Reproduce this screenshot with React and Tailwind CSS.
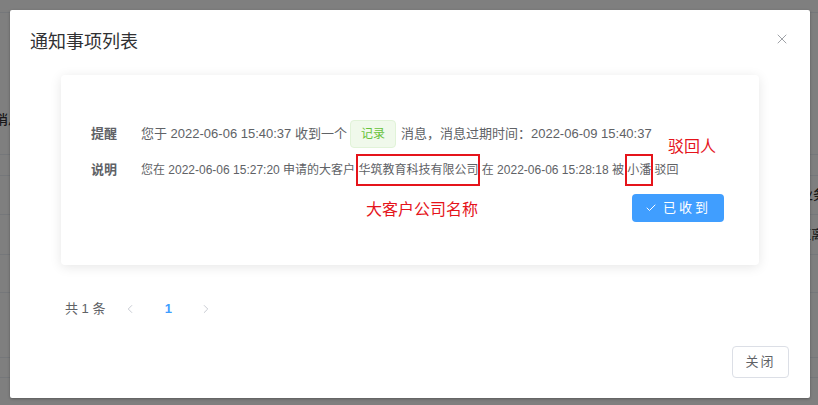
import React from "react"
import { Check, ChevronLeft, ChevronRight, X } from "lucide-react"

const font = { fontFamily: '"Liberation Sans", "Noto Sans CJK SC", sans-serif' }

// red annotation box drawn over a word
function Marked({ children }) {
  return (
    <span className="relative inline-block">
      {children}
      <span className="absolute -left-[2px] -right-[2px] -top-[7px] -bottom-[7px] border-2 border-[#e5141b] pointer-events-none" />
    </span>
  )
}

function BackgroundPage() {
  return (
    <div className="flex flex-col h-[405px] bg-white text-[#303133] text-[13px]">
      <div className="h-[13px] border-b border-[#ebeef5]" />
      <div className="h-[142px] border-b border-[#ebeef5] flex items-end pb-[25px]">
        <span className="-ml-[5px] font-medium">消息</span>
      </div>
      <div className="h-[21px] border-b border-[#ebeef5]" />
      <div className="h-[39px] border-b border-[#ebeef5] flex items-center justify-end">
        <span className="-mr-[8px] font-medium">业务</span>
      </div>
      <div className="h-[40px] border-b border-[#ebeef5] flex items-center justify-end">
        <span className="-mr-[6px]">距离</span>
      </div>
      <div className="h-[38px] border-b border-[#ebeef5]" />
      <div className="h-[65px] border-b border-[#ebeef5]" />
      <div className="h-[20px] border-b border-[#ebeef5]" />
    </div>
  )
}

export default function App() {
  return (
    <div className="relative w-[818px] h-[405px] overflow-hidden" style={font}>
      <BackgroundPage />
      <div className="absolute inset-0 bg-black/50 pt-[10px] pl-[10px]">
        <div className="w-[800px] h-[388px] bg-white rounded-[2px] shadow-[0_1px_3px_rgba(0,0,0,0.3)] flex flex-col">
          {/* header */}
          <div className="flex items-start justify-between pt-[20px] px-[20px] pb-[10px]">
            <span className="text-[18px] leading-[24px] text-[#303133]">通知事项列表</span>
            <X size={16} strokeWidth={1.3} className="text-[#909399] mt-[1px]" />
          </div>

          {/* body */}
          <div className="px-[51px] pt-[11px]">
            <div className="relative h-[190px] rounded-[4px] bg-white shadow-[0_2px_12px_0_rgba(0,0,0,0.1)] pt-[45px] pl-[30px] pr-[35px] text-[12px] text-[#606266]">
              <div className="flex items-center h-[28px] text-[13px]">
                <span className="w-[50px] font-semibold text-[#606266]">提醒</span>
                <span>您于 2022-06-06 15:40:37 收到一个</span>
                <span className="ml-[3px] mr-[5px] h-[28px] px-[10px] flex items-center rounded-[4px] border border-[#e1f3d8] bg-[#f0f9eb] text-[12px] text-[#67c23a]">记录</span>
                <span>消息，消息过期时间：2022-06-09 15:40:37</span>
              </div>
              <div className="flex items-center h-[28px] mt-[8px]">
                <span className="w-[50px] text-[13px] font-semibold text-[#606266]">说明</span>
                <span className="whitespace-pre">
                  您在 2022-06-06 15:27:20 申请的大客户 <Marked>华筑教育科技有限公司</Marked> 在 2022-06-06 15:28:18 被 <Marked>小潘</Marked> 驳回
                </span>
              </div>
              <div className="flex justify-end mt-[10px]">
                <button className="w-[92px] h-[28px] rounded-[4px] bg-[#409eff] text-white text-[13px] tracking-[3px] flex items-center justify-center gap-[6px]">
                  <Check size={12} strokeWidth={2} />
                  <span>已收到</span>
                </button>
              </div>

              {/* annotations */}
              <span className="absolute left-[607px] top-[60px] text-[16px] text-[#e5141b]">驳回人</span>
              <span className="absolute left-[305px] top-[123px] text-[16px] text-[#e5141b]">大客户公司名称</span>
            </div>

            {/* pagination */}
            <div className="flex items-center h-[28px] mt-[30px] pl-[4px] text-[13px] text-[#606266]">
              <span className="mr-[10px] whitespace-pre">共 1 条</span>
              <span className="w-[30px] flex justify-center text-[#c0c4cc]">
                <ChevronLeft size={14} strokeWidth={1.5} />
              </span>
              <span className="mx-[5px] w-[36px] text-center font-bold text-[#409eff]">1</span>
              <span className="w-[30px] flex justify-center text-[#c0c4cc]">
                <ChevronRight size={14} strokeWidth={1.5} />
              </span>
            </div>
          </div>

          {/* footer */}
          <div className="mt-auto flex justify-end px-[21px] pb-[20px]">
            <button className="w-[57px] h-[32px] rounded-[4px] border border-[#dcdfe6] bg-white text-[13px] text-[#606266] tracking-[2px]">
              关闭
            </button>
          </div>
        </div>
      </div>
    </div>
  )
}
